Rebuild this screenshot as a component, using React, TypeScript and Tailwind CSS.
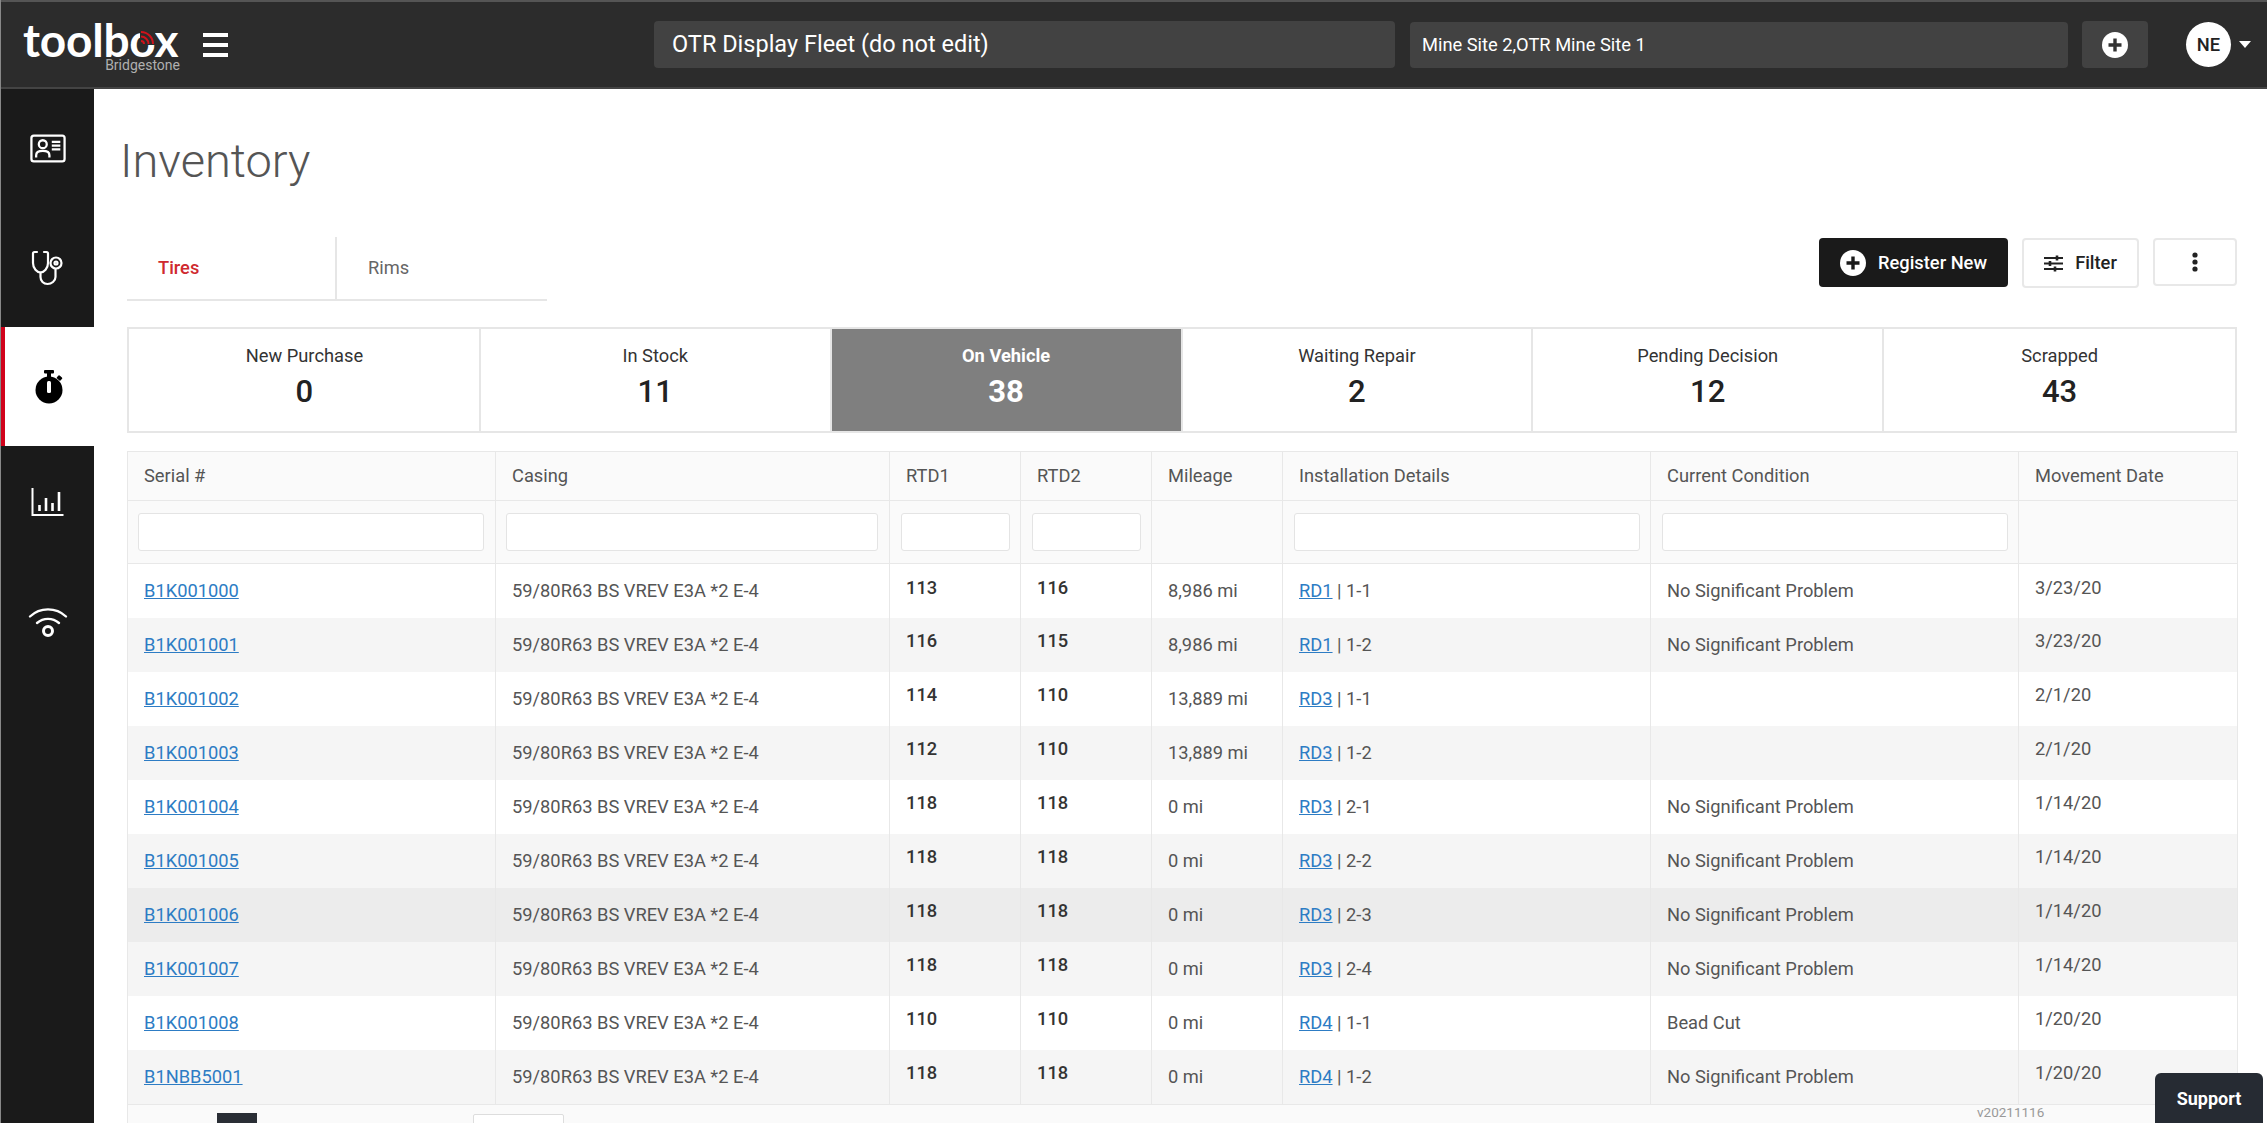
const font = { fontFamily: "Roboto, sans-serif" };

const tiles = [
  { label: "New Purchase", value: 0 },
  { label: "In Stock", value: 11 },
  { label: "On Vehicle", value: 38, active: true },
  { label: "Waiting Repair", value: 2 },
  { label: "Pending Decision", value: 12 },
  { label: "Scrapped", value: 43 },
];

const columns = [
  { name: "Serial #", width: "w-[368px]", filter: true },
  { name: "Casing", width: "w-[394px]", filter: true },
  { name: "RTD1", width: "w-[131px]", filter: true },
  { name: "RTD2", width: "w-[131px]", filter: true },
  { name: "Mileage", width: "w-[131px]", filter: false },
  { name: "Installation Details", width: "w-[368px]", filter: true },
  { name: "Current Condition", width: "w-[368px]", filter: true },
  { name: "Movement Date", width: "w-[219px]", filter: false },
];

const rows = [
  ["B1K001000", "113", "116", "8,986 mi", "RD1", "1-1", "No Significant Problem", "3/23/20"],
  ["B1K001001", "116", "115", "8,986 mi", "RD1", "1-2", "No Significant Problem", "3/23/20"],
  ["B1K001002", "114", "110", "13,889 mi", "RD3", "1-1", "", "2/1/20"],
  ["B1K001003", "112", "110", "13,889 mi", "RD3", "1-2", "", "2/1/20"],
  ["B1K001004", "118", "118", "0 mi", "RD3", "2-1", "No Significant Problem", "1/14/20"],
  ["B1K001005", "118", "118", "0 mi", "RD3", "2-2", "No Significant Problem", "1/14/20"],
  ["B1K001006", "118", "118", "0 mi", "RD3", "2-3", "No Significant Problem", "1/14/20"],
  ["B1K001007", "118", "118", "0 mi", "RD3", "2-4", "No Significant Problem", "1/14/20"],
  ["B1K001008", "110", "110", "0 mi", "RD4", "1-1", "Bead Cut", "1/20/20"],
  ["B1NBB5001", "118", "118", "0 mi", "RD4", "1-2", "No Significant Problem", "1/20/20"],
];

function PlusCircle({ size, color }: { size: number; color: string }) {
  return (
    <svg width={size} height={size} viewBox="0 0 26 26">
      <circle cx="13" cy="13" r="13" fill="#fff" />
      <path d="M13 6.5v13M6.5 13h13" stroke={color} strokeWidth="3.4" />
    </svg>
  );
}

function IdCardIcon() {
  return (
    <svg width="36" height="29" viewBox="0 0 38 30" fill="none" stroke="#fff" strokeWidth="2.4">
      <rect x="1.5" y="1.5" width="35" height="27" rx="2.5" />
      <circle cx="13.5" cy="10.5" r="4.2" />
      <path d="M6.5 24.5v-2.5c0-3 2.5-4.5 7-4.5s7 1.5 7 4.5v2.5" />
      <path d="M23 8h9M23 12h9M23 16h9" strokeWidth="2.4" />
    </svg>
  );
}

function StethoscopeIcon() {
  return (
    <svg width="34" height="36" viewBox="0 0 34 36" fill="none" stroke="#fff" strokeWidth="2.2" strokeLinecap="round">
      <path d="M6 2H3.5C2.5 2 2 2.6 2 3.5V13c0 5.5 4 9.5 7.5 9.5S17 18.5 17 13V3.5C17 2.6 16.5 2 15.5 2H13" />
      <path d="M9.5 22.5V27c0 4 3 7 7 7s8-3 8-7v-8" />
      <circle cx="25" cy="13" r="5.5" />
      <circle cx="25" cy="13" r="1.5" />
    </svg>
  );
}

function StopwatchIcon() {
  return (
    <svg width="28" height="34" viewBox="0 0 28 34">
      <rect x="9" y="0" width="10" height="3.5" rx="1" fill="#000" />
      <rect x="12" y="3" width="4" height="4" fill="#000" />
      <rect x="22" y="6" width="5" height="4" rx="1" transform="rotate(40 24.5 8)" fill="#000" />
      <circle cx="14" cy="20" r="13.5" fill="#000" />
      <rect x="12" y="11" width="4" height="12" rx="1.5" fill="#fff" />
    </svg>
  );
}

function ChartIcon() {
  return (
    <svg width="34" height="30" viewBox="0 0 34 30" fill="none" stroke="#fff">
      <path d="M1.5 1v27h31" strokeWidth="2" />
      <path d="M8.5 24v-6M15 24V11M21.5 24v-8M28 24V5" strokeWidth="2.6" />
    </svg>
  );
}

function WifiIcon() {
  return (
    <svg width="40" height="32" viewBox="0 0 40 32" fill="none" stroke="#fff" strokeWidth="2.4" strokeLinecap="round">
      <path d="M2 10.5C12 1 28 1 38 10.5" />
      <path d="M9 17c6.5-5.5 15.5-5.5 22 0" />
      <circle cx="20" cy="25" r="4.5" strokeWidth="3" />
    </svg>
  );
}

function TuneIcon() {
  return (
    <svg width="19" height="17" viewBox="0 0 19 17" fill="none" stroke="#222" strokeWidth="2">
      <path d="M0 3h19M0 8.5h19M0 14h19" />
      <path d="M13 0.5v5M6 6v5M11 11.5v5" strokeWidth="2.6" />
    </svg>
  );
}

function Sidebar() {
  const items = [
    { icon: <IdCardIcon />, pad: "" },
    { icon: <StethoscopeIcon />, pad: "" },
    { icon: <StopwatchIcon />, pad: "" },
    { icon: <ChartIcon />, pad: "pb-[8px]" },
    { icon: <WifiIcon />, pad: "pb-[6px]" },
  ];
  return (
    <aside className="w-[93px] shrink-0 bg-[#1a1a1a]">
      {items.map((item, i) => (
        <div
          key={i}
          className={`flex h-[119px] items-center justify-center ${item.pad} ${
            i === 2 ? "border-l-[4px] border-[#d0021b] bg-white pr-[2px]" : ""
          }`}
        >
          {item.icon}
        </div>
      ))}
    </aside>
  );
}

function Header() {
  return (
    <header className="flex h-[89px] shrink-0 items-center border-t-2 border-b-2 border-t-[#555] border-b-[#444] bg-[#2c2c2c] pl-[22px]">
      <div className="relative h-[72px] w-[160px] shrink-0">
        <span className="absolute left-0 top-[12px] text-[46px] leading-[38px] font-bold tracking-[-0.2px] text-white" style={{ fontFamily: "Lato, sans-serif" }}>
          toolbox
        </span>
        <svg className="absolute left-[117px] top-[21px]" width="15" height="15" viewBox="0 0 15 15" fill="none">
          <rect width="15" height="15" fill="#2c2c2c" />
          <path d="M1 2a12 12 0 0 1 12 12M1 6.5a7.5 7.5 0 0 1 7.5 7.5M1 11a3 3 0 0 1 3 3" stroke="#d0121b" strokeWidth="2" />
        </svg>
        <span className="absolute right-[3px] top-[50px] text-[14px] leading-[12px] text-[#b0b0b0]">
          Bridgestone
        </span>
      </div>
      <div className="ml-[20px] flex w-[25px] shrink-0 flex-col gap-[6px]">
        <span className="h-[4px] bg-white" />
        <span className="h-[4px] bg-white" />
        <span className="h-[4px] bg-white" />
      </div>
      <div className="ml-[426px] flex h-[47px] w-[741px] shrink-0 items-center rounded-[4px] bg-[#424242] pl-[18px] text-[23.5px] text-white">
        OTR Display Fleet (do not edit)
      </div>
      <div className="ml-[15px] flex h-[46px] w-[658px] shrink-0 items-center rounded-[4px] bg-[#424242] pl-[12px] text-[18.3px] text-white">
        Mine Site 2,OTR Mine Site 1
      </div>
      <div className="ml-[14px] flex h-[47px] w-[66px] shrink-0 items-center justify-center rounded-[4px] bg-[#424242]">
        <PlusCircle size={26} color="#333" />
      </div>
      <div className="ml-[38px] flex h-[45px] w-[45px] shrink-0 items-center justify-center rounded-full bg-white text-[18.3px] font-medium text-[#222]">
        NE
      </div>
      <div className="ml-[8px] h-0 w-0 border-x-[6px] border-t-[7px] border-x-transparent border-t-white" />
    </header>
  );
}

function Table() {
  return (
    <table className="w-[2110px] table-fixed border-collapse text-[18.3px] text-[#555]">
      <colgroup>
        {columns.map((c) => (
          <col key={c.name} className={c.width} />
        ))}
      </colgroup>
      <thead>
        <tr className="h-[49px] bg-[#fafafa]">
          {columns.map((c) => (
            <th key={c.name} className="border border-[#e8e8e8] pl-[16px] text-left font-normal">
              {c.name}
            </th>
          ))}
        </tr>
        <tr className="h-[63px] bg-[#fafafa]">
          {columns.map((c, i) => (
            <th key={c.name} className={`border border-[#e8e8e8] pb-[1px] ${i < 2 ? "pl-[10px] pr-[11px]" : "pl-[11px] pr-[10px]"}`}>
              {c.filter && <div className="h-[38px] rounded-[3px] border border-[#e4e4e4] bg-white" />}
            </th>
          ))}
        </tr>
      </thead>
      <tbody>
        {rows.map((r, i) => (
          <tr key={r[0]} className={`h-[54px] ${i === 6 ? "bg-[#ececec]" : i % 2 === 1 ? "bg-[#f5f5f5]" : "bg-white"}`}>
            <td className="border-x border-[#e8e8e8] pl-[16px]">
              <a className="text-[#2d7cc4] underline">{r[0]}</a>
            </td>
            <td className="border-x border-[#e8e8e8] pl-[16px]">59/80R63 BS VREV E3A *2 E-4</td>
            <td className="border-x border-[#e8e8e8] pb-[7px] pl-[16px] font-medium text-[#333]">{r[1]}</td>
            <td className="border-x border-[#e8e8e8] pb-[7px] pl-[16px] font-medium text-[#333]">{r[2]}</td>
            <td className="border-x border-[#e8e8e8] pl-[16px]">{r[3]}</td>
            <td className="border-x border-[#e8e8e8] pl-[16px]">
              <a className="text-[#2d7cc4] underline">{r[4]}</a> | {r[5]}
            </td>
            <td className="border-x border-[#e8e8e8] pl-[16px]">{r[6]}</td>
            <td className="border-x border-[#e8e8e8] pb-[7px] pl-[16px]">{r[7]}</td>
          </tr>
        ))}
      </tbody>
    </table>
  );
}

export default function App() {
  return (
    <div className="relative flex h-screen flex-col overflow-hidden border-l border-[#888] bg-white" style={font}>
      <Header />
      <div className="flex min-h-0 flex-1">
        <Sidebar />
        <main className="min-w-0 flex-1 pl-[33px]">
          <h1 className="mt-[40px] ml-[-7px] text-[47px] leading-[64px] font-light text-[#555]">Inventory</h1>
          <div className="mt-[44px] flex h-[64px] items-start justify-between pr-[30px]">
            <div className="flex h-[64px] w-[420px] border-b-2 border-[#e6e6e6] text-[18.3px]">
              <div className="flex w-[210px] items-center border-r-2 border-[#e6e6e6] pl-[31px] font-medium text-[#cf2a2f]">Tires</div>
              <div className="flex items-center pl-[31px] text-[#666]">Rims</div>
            </div>
            <div className="flex items-start gap-[14px] pt-[1px] text-[18.3px] font-medium">
              <button className="flex h-[49px] w-[189px] items-center justify-center gap-[12px] rounded-[4px] bg-[#1a1a1a] text-white">
                <PlusCircle size={26} color="#1a1a1a" />
                Register New
              </button>
              <button className="flex h-[50px] w-[117px] items-center justify-center gap-[12px] rounded-[4px] border-2 border-[#e8e8e8] bg-white text-[#222]">
                <TuneIcon />
                Filter
              </button>
              <button className="flex h-[48px] w-[84px] items-center justify-center rounded-[4px] border-2 border-[#e8e8e8] bg-white">
                <svg width="6" height="20" viewBox="0 0 6 20" fill="#222">
                  <circle cx="3" cy="3" r="2.6" />
                  <circle cx="3" cy="10" r="2.6" />
                  <circle cx="3" cy="17" r="2.6" />
                </svg>
              </button>
            </div>
          </div>
          <div className="mt-[26px] grid h-[106px] w-[2110px] grid-cols-6 border-2 border-[#e6e6e6] pl-[1px]">
            {tiles.map((t, i) => (
              <div
                key={t.label}
                className={`flex flex-col items-center justify-center pb-[2px] ${i < 5 ? "border-r-2 border-[#e6e6e6]" : ""} ${
                  t.active ? "bg-[#7f7f7f] text-white" : "bg-white text-[#333]"
                }`}
              >
                <span className={`text-[18.3px] leading-[26px] ${t.active ? "font-bold" : ""}`}>{t.label}</span>
                <span className={`text-[31px] leading-[46px] ${t.active ? "font-bold" : "font-medium text-[#222]"}`}>{t.value}</span>
              </div>
            ))}
          </div>
          <div className="mt-[18px]">
            <Table />
            <div className="relative h-[30px] w-[2110px] border-x border-t border-[#e8e8e8] bg-[#fafafa]">
              <div className="absolute left-[89px] top-[8px] h-[20px] w-[40px] bg-[#2a2e35]" />
              <div className="absolute left-[345px] top-[9px] h-[20px] w-[91px] rounded-[2px] border border-[#ddd] bg-white" />
              <span className="absolute left-[1849px] top-[-3px] text-[13.5px] text-[#999]">v20211116</span>
            </div>
          </div>
        </main>
      </div>
      <div className="absolute right-[4px] bottom-0 flex h-[50px] w-[108px] items-center justify-center rounded-t-[6px] bg-[#262b33] text-[18px] font-bold text-white">
        Support
      </div>
    </div>
  );
}
